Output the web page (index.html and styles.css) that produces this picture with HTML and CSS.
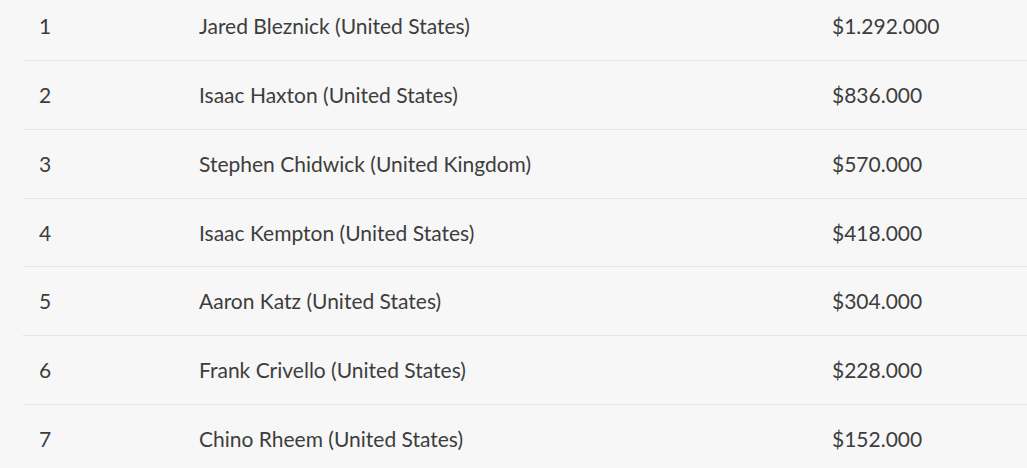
FILE: index.html
```html
<!DOCTYPE html>
<html>
<head>
<meta charset="utf-8">
<link rel="stylesheet" href="styles.css">
</head>
<body>
<div class="wrap">
<table class="results">
<tbody>
<tr><td class="pos">1</td><td class="name">Jared Bleznick (United States)</td><td class="prize">$1.292.000</td></tr>
<tr><td class="pos">2</td><td class="name">Isaac Haxton (United States)</td><td class="prize">$836.000</td></tr>
<tr><td class="pos">3</td><td class="name">Stephen Chidwick (United Kingdom)</td><td class="prize">$570.000</td></tr>
<tr><td class="pos">4</td><td class="name">Isaac Kempton (United States)</td><td class="prize">$418.000</td></tr>
<tr><td class="pos">5</td><td class="name">Aaron Katz (United States)</td><td class="prize">$304.000</td></tr>
<tr><td class="pos">6</td><td class="name">Frank Crivello (United States)</td><td class="prize">$228.000</td></tr>
<tr><td class="pos">7</td><td class="name">Chino Rheem (United States)</td><td class="prize">$152.000</td></tr>
</tbody>
</table>
</div>
</body>
</html>
```
FILE: styles.css
```css
html, body {
  margin: 0;
  padding: 0;
  background: #f7f7f7;
  overflow: hidden;
}
.wrap {
  margin-top: -7.8px;
  padding-left: 23px;
  overflow: hidden;
}
.results {
  border-collapse: collapse;
  width: 1004px;
  table-layout: fixed;
  font-family: Lato, "Open Sans", sans-serif;
  font-size: 21px;
  color: #3d3d3d;
}
.results td {
  padding: 20px 16px;
  line-height: 27.8px;
  border-top: 1px solid #e4e4e4;
  text-align: left;
  vertical-align: middle;
  white-space: nowrap;
}
.results tr:first-child td {
  border-top: none;
}
.results td.pos { width: 128px; }
.results td.name { width: 601px; }
```
